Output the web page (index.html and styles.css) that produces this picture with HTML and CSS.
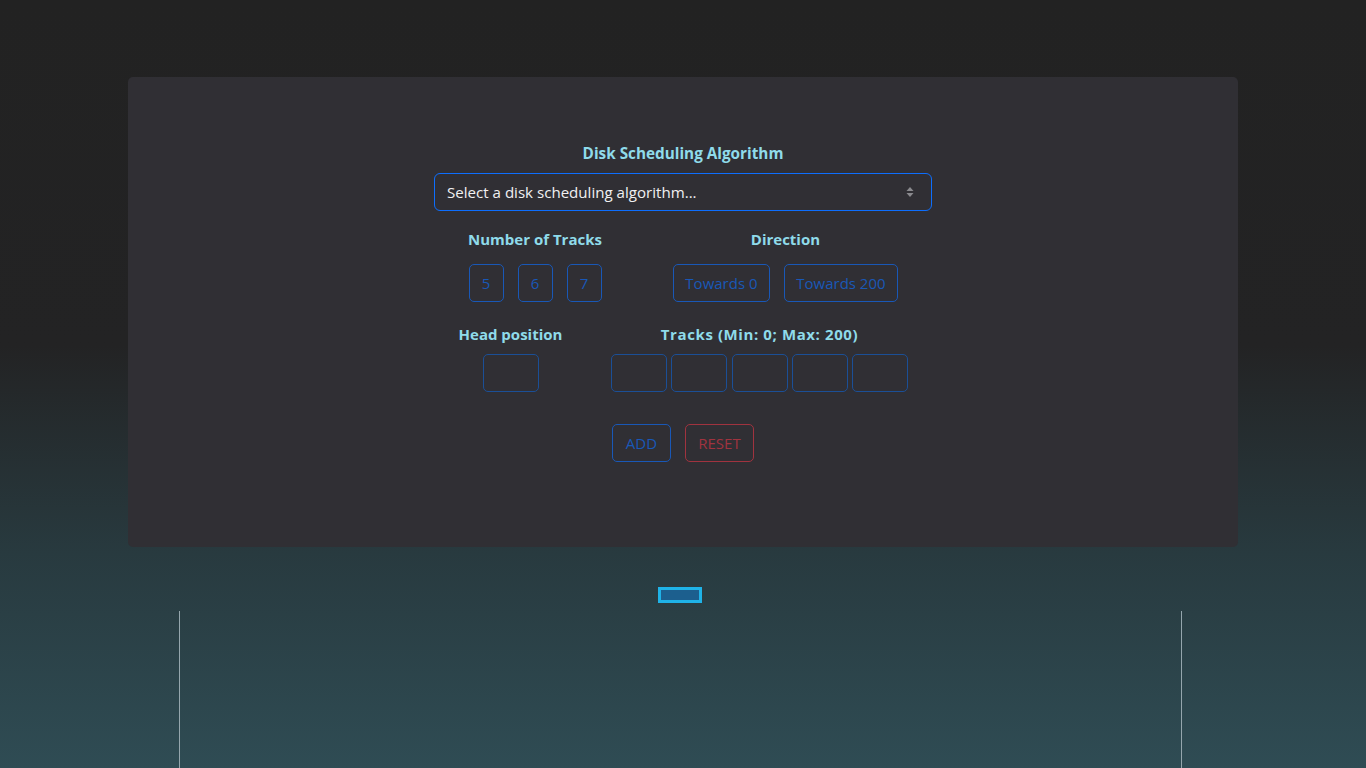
FILE: index.html
```html
<!DOCTYPE html>
<html lang="en">
<head>
<meta charset="utf-8">
<title>Disk Scheduling</title>
<link rel="stylesheet" href="styles.css">
</head>
<body>
<div class="page">
  <div class="card">
    <div class="field field-algo">
      <label class="label">Disk Scheduling Algorithm</label>
      <div class="select">
        <span>Select a disk scheduling algorithm...</span>
        <svg class="select-arrow" width="8" height="12" viewBox="0 0 8 12"><path d="M4 1 L7.5 5 H0.5 Z M4 11 L7.5 7 H0.5 Z" fill="#8a8a8e"/></svg>
      </div>
    </div>

    <div class="row row-opts">
      <div class="group">
        <div class="label">Number of Tracks</div>
        <div class="btns">
          <button class="btn btn-blue num">5</button>
          <button class="btn btn-blue num">6</button>
          <button class="btn btn-blue num">7</button>
        </div>
      </div>
      <div class="group">
        <div class="label">Direction</div>
        <div class="btns">
          <button class="btn btn-blue dir0">Towards 0</button>
          <button class="btn btn-blue dir200">Towards 200</button>
        </div>
      </div>
    </div>

    <div class="row row-inputs">
      <div class="group group-head">
        <div class="label">Head position</div>
        <div class="inputs"><div class="inp"></div></div>
      </div>
      <div class="group">
        <div class="label label-wide">Tracks (Min: 0; Max: 200)</div>
        <div class="inputs tracks">
          <div class="inp"></div><div class="inp"></div><div class="inp"></div><div class="inp"></div><div class="inp"></div>
        </div>
      </div>
    </div>

    <div class="row row-actions">
      <button class="btn btn-blue add">ADD</button>
      <button class="btn btn-red reset">RESET</button>
    </div>
  </div>

  <div class="chart">
    <div class="marker"></div>
    <div class="axes">
      <div class="axis"></div>
      <div class="axis"></div>
    </div>
  </div>
</div>
</body>
</html>
```

FILE: styles.css
```css
* { box-sizing: border-box; }
html, body { margin: 0; padding: 0; height: 100%; }
body {
  background: linear-gradient(to bottom, #222222 0%, #232324 45%, #283a3f 72%, #2f4c54 100%);
  font-family: "Open Sans", "Noto Sans", "Liberation Sans", sans-serif;
  color: #e9e9ea;
  overflow: hidden;
}
.page {
  width: 1110px;
  margin: 0 auto;
  padding-top: 77px;
  min-height: 768px;
  display: flex;
  flex-direction: column;
}
.card {
  background: #302f34;
  border-radius: 5px;
  height: 470px;
  padding-top: 64px;
  display: flex;
  flex-direction: column;
  align-items: center;
}
.label {
  font-weight: 700;
  font-size: 15px;
  line-height: 24px;
  color: #8fdbea;
  text-align: center;
  display: block;
  white-space: nowrap;
}
.field-algo .label { font-size: 15.3px; }
.label-wide { letter-spacing: 0.6px; }
.field-algo { width: 498px; display: flex; flex-direction: column; align-items: center; }
.select {
  margin-top: 8px;
  width: 498px;
  height: 38px;
  border: 1px solid #0d6efd;
  border-radius: 6px;
  display: flex;
  align-items: center;
  justify-content: space-between;
  padding: 0 17px 0 12px;
  font-size: 15.1px;
  color: #f1f1f2;
}
.select-arrow { display: block; }
.row { display: flex; justify-content: center; }
.row-opts { margin-top: 16px; gap: 71px; }
.row-inputs { margin-top: 20px; gap: 48px; }
.row-actions { margin-top: 32px; gap: 14px; }
.group { display: flex; flex-direction: column; align-items: center; }
.row-opts .btns { margin-top: 13px; display: flex; gap: 14px; }
.btn {
  background: transparent;
  font-family: inherit;
  font-size: 15px;
  height: 38px;
  border-radius: 5px;
  padding: 0;
  display: flex;
  align-items: center;
  justify-content: center;
}
.btn-blue { border: 1px solid #1958b7; color: #1958b7; }
.btn-red { border: 1px solid #a0333f; color: #a0333f; }
.num { width: 35px; }
.dir0 { width: 97px; }
.dir200 { width: 114px; }
.add { width: 59px; }
.reset { width: 69px; }
.group-head { width: 105px; }
.inputs { margin-top: 8px; display: flex; gap: 4.25px; }
.inp {
  width: 56px;
  height: 38px;
  border: 1px solid #1b4f96;
  border-radius: 5px;
}
.chart {
  display: flex;
  flex-direction: column;
  align-items: center;
  margin-right: 6px;
}
.marker {
  margin-top: 40px;
  width: 44px;
  height: 16px;
  border: 3px solid #1fb3e8;
  background: #1c5f8e;
}
.axes {
  margin-top: 8px;
  width: 1003px;
  height: 160px;
  display: flex;
  justify-content: space-between;
}
.axis { width: 1px; height: 100%; background: #95a6ad; }
```
